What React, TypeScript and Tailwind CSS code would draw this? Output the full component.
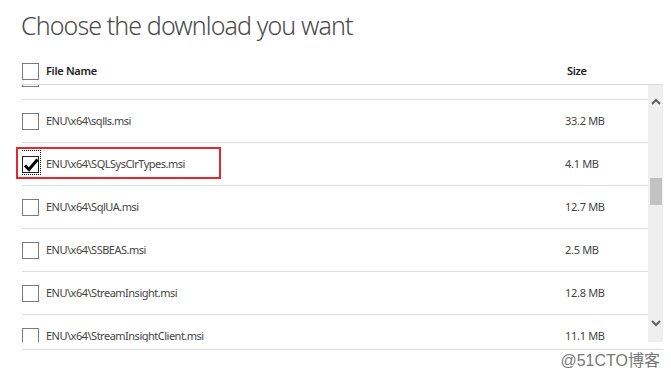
import React from "react";

type FileRow = { name: string; size: string; checked?: boolean };

// first row is scrolled out of view, only its checkbox edge shows
const rows: FileRow[] = [
  { name: "", size: "" },
  { name: "ENU\\x64\\sqlls.msi", size: "33.2 MB" },
  { name: "ENU\\x64\\SQLSysClrTypes.msi", size: "4.1 MB", checked: true },
  { name: "ENU\\x64\\SqlUA.msi", size: "12.7 MB" },
  { name: "ENU\\x64\\SSBEAS.msi", size: "2.5 MB" },
  { name: "ENU\\x64\\StreamInsight.msi", size: "12.8 MB" },
  { name: "ENU\\x64\\StreamInsightClient.msi", size: "11.1 MB" },
];

const CheckBox: React.FC<{ checked?: boolean }> = ({ checked }) => (
  <div className="relative w-[17px] h-[17px] shrink-0">
    <div
      className={
        checked
          ? "w-[17px] h-[17px] border border-[#222] bg-white"
          : "w-[17px] h-[17px] border border-[#7a7a7a] bg-white"
      }
    />
    {checked && (
      <>
        <div className="absolute left-[-2px] top-[-6px] w-[21px] h-[25px] border border-dotted border-black" />
        <svg
          className="absolute left-[1px] top-[1px] w-[16px] h-[16px]"
          viewBox="0 0 16 16"
          fill="none"
          stroke="#000"
          strokeWidth={3}
        >
          <path d="M2 8.5 L6 12.5 L14.5 2.5" />
        </svg>
      </>
    )}
  </div>
);

export default function App() {
  return (
    <div
      className="relative w-[671px] h-[377px] bg-white overflow-hidden text-[#444]"
      style={{ fontFamily: '"Noto Sans", "Open Sans", sans-serif' }}
    >
      <h1 className="pl-[21px] pt-[8px] text-[25px] font-light leading-[34px] text-[#4a4a4a] tracking-[-0.9px]">
        Choose the download you want
      </h1>

      <div className="ml-[22px] w-[641px] mt-[12px]">
        <div className="flex items-center h-[31px] pt-[4px] border-b border-[#d8d8d8]">
          <div className="flex items-center gap-[7px] w-[545px]">
            <CheckBox />
            <span className="text-[11px] leading-[16px] font-semibold text-[#222] tracking-[-0.3px]">
              File Name
            </span>
          </div>
          <span className="text-[11px] leading-[16px] font-semibold text-[#222] tracking-[-0.3px]">
            Size
          </span>
        </div>

        <div className="flex h-[257px]">
          <div className="flex-1 overflow-hidden">
            <div className="mt-[-28px]">
              {rows.map((r, i) => (
                <div
                  key={i}
                  className="flex items-center h-[43px] border-b border-[#dcdcdc]"
                >
                  <div className="flex items-center gap-[7px] w-[543px]">
                    <CheckBox checked={r.checked} />
                    <span className="text-[11px] leading-[16px] text-[#444] tracking-[-0.5px]">
                      {r.name}
                    </span>
                  </div>
                  <span className="text-[11px] leading-[16px] text-[#444] tracking-[-0.3px]">
                    {r.size}
                  </span>
                </div>
              ))}
            </div>
          </div>
          <div className="w-[15px] bg-[#efefef] flex flex-col items-center">
            <svg className="mt-[13px]" width="10" height="7" viewBox="0 0 10 7" fill="none" stroke="#606060" strokeWidth={2}>
              <path d="M1 6 L5 2 L9 6" />
            </svg>
            <div className="mt-[73px] w-[12px] h-[27px] bg-[#c2c2c2]" />
            <div className="flex-1" />
            <svg className="mb-[15px]" width="10" height="7" viewBox="0 0 10 7" fill="none" stroke="#606060" strokeWidth={2}>
              <path d="M1 1 L5 5 L9 1" />
            </svg>
          </div>
        </div>
        <div className="h-[8px] border-b border-[#dcdcdc]" />
      </div>

      <div className="absolute left-[16px] top-[147px] w-[205px] h-[32px] border-2 border-[#e8272a]" />

      <div
        className="absolute right-[11px] top-[351px] text-[16px] leading-[20px] text-[#777]"
        style={{ fontFamily: '"Liberation Sans", "Noto Sans CJK SC", sans-serif' }}
      >
        @51CTO博客
      </div>
    </div>
  );
}
